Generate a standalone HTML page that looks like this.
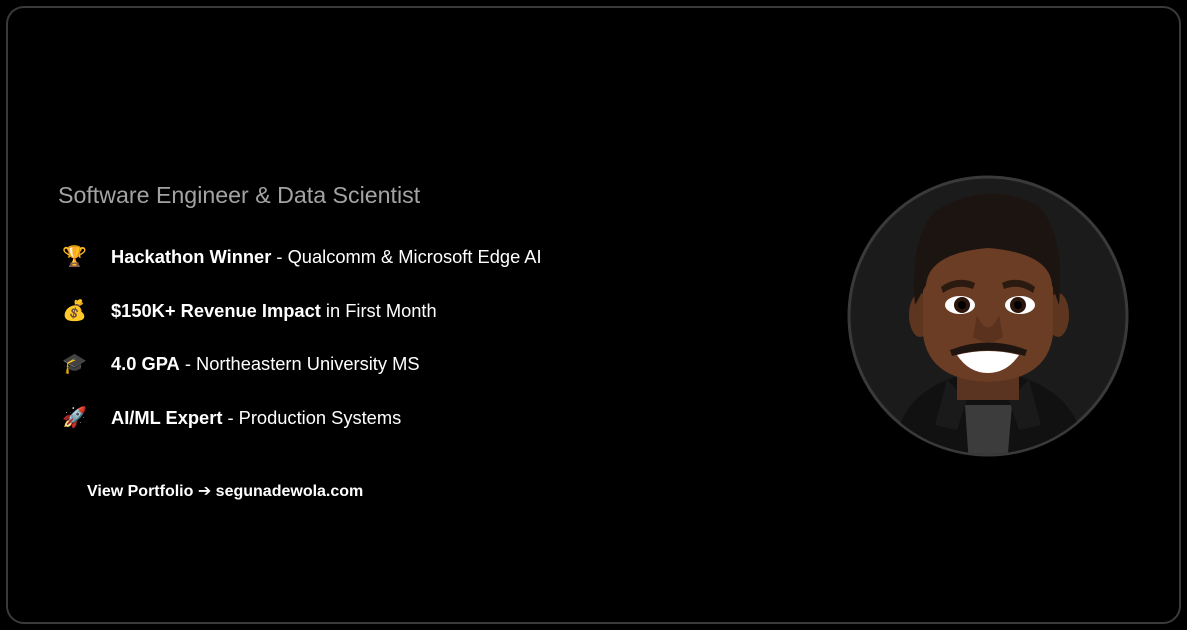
<!DOCTYPE html>
<html><head><meta charset="utf-8"><style>
html,body{margin:0;padding:0;background:#000;width:1187px;height:630px;overflow:hidden}
.frame{position:absolute;left:6px;top:6px;width:1171px;height:614px;border:2px solid #3a3a3a;border-radius:18px;box-sizing:content-box}
body{font-family:"Liberation Sans","DejaVu Sans",sans-serif;color:#fff}
.title{position:absolute;left:58px;top:182px;font-size:23.2px;color:#a3a3a3}
.item{position:absolute;left:62px;font-size:18.3px;height:24px;line-height:24px;white-space:nowrap}
.item .e{display:inline-block;width:49px;font-size:20px}
.item b{font-weight:bold}
.link{position:absolute;left:87px;top:481px;font-size:16px;font-weight:bold}
.av{position:absolute;left:847px;top:175px}
</style></head><body>
<div class="frame"></div>
<div class="title">Software Engineer &amp; Data Scientist</div>
<div class="item" style="top:245px"><span class="e">🏆</span><b>Hackathon Winner</b> - Qualcomm &amp; Microsoft Edge AI</div>
<div class="item" style="top:299px"><span class="e">💰</span><b>$150K+ Revenue Impact</b> in First Month</div>
<div class="item" style="top:352px"><span class="e">🎓</span><b>4.0 GPA</b> - Northeastern University MS</div>
<div class="item" style="top:406px"><span class="e">🚀</span><b>AI/ML Expert</b> - Production Systems</div>
<div class="link">View Portfolio ➔ segunadewola.com</div>
<svg class="av" width="282" height="282" viewBox="0 0 282 282">
<defs><clipPath id="c"><circle cx="141" cy="141" r="138"/></clipPath></defs>
<circle cx="141" cy="141" r="139" fill="#1b1b1b" stroke="#3a3a3a" stroke-width="3"/>
<g clip-path="url(#c)">
<path d="M50 260 Q60 215 115 200 L167 200 Q222 215 235 260 L235 290 L50 290Z" fill="#111"/>
<path d="M118 230 L165 230 L160 290 L122 290Z" fill="#3c3c3c"/>
<path d="M100 205 L120 225 L110 255 L88 250Z M182 205 L162 225 L172 255 L194 250Z" fill="#1a1a1a"/>
<rect x="110" y="175" width="62" height="50" fill="#5a3420"/>
<ellipse cx="73" cy="140" rx="11" ry="22" fill="#5e3620"/>
<ellipse cx="211" cy="140" rx="11" ry="22" fill="#5e3620"/>
<path d="M76 100 Q76 70 141 68 Q206 70 206 100 L206 160 Q200 205 141 207 Q82 205 76 160Z" fill="#6a3d24"/>
<path d="M68 130 Q62 60 90 35 Q140 5 190 30 Q218 55 212 130 L205 110 Q203 78 141 73 Q82 78 79 110Z" fill="#1c1410"/>
<path d="M94 112 Q110 100 128 108 L126 114 Q110 108 96 118Z M155 108 Q172 100 188 112 L186 118 Q172 108 157 114Z" fill="#2a1a10"/>
<ellipse cx="113" cy="130" rx="15" ry="9" fill="#fff"/>
<ellipse cx="173" cy="130" rx="15" ry="9" fill="#fff"/>
<circle cx="115" cy="130" r="8" fill="#2a160c"/><circle cx="171" cy="130" r="8" fill="#2a160c"/>
<circle cx="115" cy="130" r="4" fill="#000"/><circle cx="171" cy="130" r="4" fill="#000"/>
<path d="M130 140 Q141 165 152 140 L156 162 Q141 172 126 162Z" fill="#5a321d"/>
<path d="M103 175 Q141 160 180 175 L178 181 Q141 170 105 181Z" fill="#1e1410"/>
<path d="M110 180 Q141 172 172 180 Q160 198 141 198 Q122 198 110 180Z" fill="#fff"/>
</g>
</svg>
</body></html>
